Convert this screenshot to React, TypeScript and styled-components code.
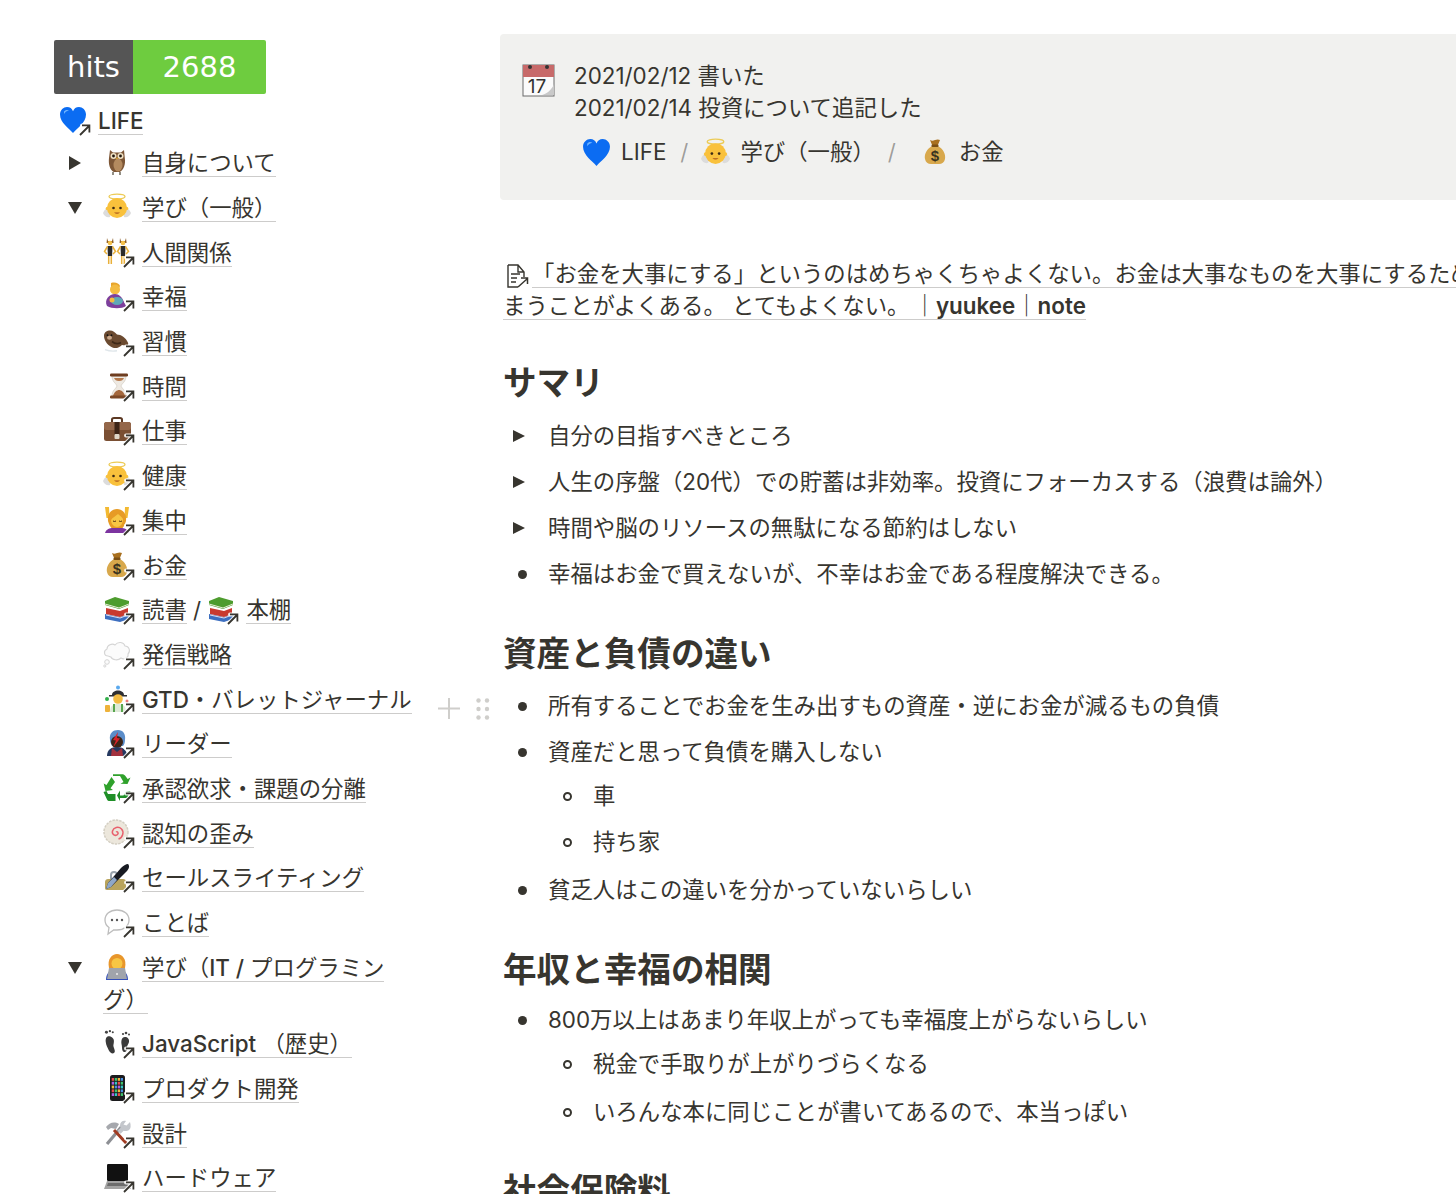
import React from "react";
import styled, { createGlobalStyle } from "styled-components";

const Global = createGlobalStyle`
  html, body { margin: 0; padding: 0; background: #fff; }
  body {
    font-family: Inter, "Noto Sans CJK JP", sans-serif;
    color: #37352f;
    font-size: 22.4px;
    line-height: 32px;
    overflow: hidden;
  }
  #root { width: 1456px; height: 1194px; overflow: hidden; }
`;

const Page = styled.div`
  display: flex;
  width: 1456px;
  height: 1194px;
  overflow: hidden;
`;

const Sidebar = styled.aside`
  position: relative;
  flex: none;
  width: 366px;
  padding: 40px 80px 0 54px;
`;

const Badge = styled.div`
  display: flex;
  width: 212px;
  height: 54px;
  margin-bottom: 5px;
  border-radius: 2px;
  overflow: hidden;
  font-family: "DejaVu Sans", sans-serif;
  font-size: 29px;
  line-height: 54px;
  color: #fff;
`;

const BadgeLabel = styled.span`
  width: 79px;
  text-align: center;
  background: #555;
`;

const BadgeCount = styled.span`
  flex: 1;
  text-align: center;
  background: #6ecc3f;
`;

const TopRow = styled.div`
  padding: 6px 0 4px 5px;
`;

const ToggleRow = styled.div`
  display: flex;
  padding: 6.35px 0;
`;

const CaretCell = styled.div`
  flex: none;
  width: 49px;
  height: 32px;
  padding-left: 14px;
  box-sizing: border-box;
  display: flex;
  align-items: center;
`;

const Caret = styled.span<{ $open?: boolean }>`
  display: block;
  width: 0;
  height: 0;
  ${(p) =>
    p.$open
      ? `border-left: 7.5px solid transparent; border-right: 7.5px solid transparent; border-top: 12px solid #37352f;`
      : `margin-left: 1px; border-top: 7px solid transparent; border-bottom: 7px solid transparent; border-left: 12.5px solid #37352f;`}
`;

const RowBody = styled.div`
  flex: 1;
  min-width: 0;
`;

const SubRow = styled.div`
  padding: 6.35px 0 6.35px 49px;
`;

const PageLink = styled.span`
  border-bottom: 1.5px solid rgba(55, 53, 47, 0.25);
`;

const Latin = styled.span`
  font-weight: 500;
`;

const Strong = styled.span`
  font-weight: 600;
`;

const IconBox = styled.span`
  position: relative;
  display: inline-block;
  width: 32px;
  height: 30px;
  margin-right: 7px;
  vertical-align: -7px;
`;

const EmojiSvg = styled.svg<{ $size: number }>`
  display: block;
  width: ${(p) => p.$size}px;
  height: ${(p) => p.$size}px;
  flex: none;
`;

const ArrowMark = styled.svg`
  position: absolute;
  right: 0;
  bottom: 0;
  width: 13px;
  height: 13px;
`;

const HoverControls = styled.svg`
  position: absolute;
  left: 436px;
  top: 696px;
  width: 58px;
  height: 26px;
`;

const Main = styled.main`
  flex: none;
  width: 1120px;
  padding-top: 34px;
`;

const Callout = styled.section`
  display: flex;
  height: 166px;
  box-sizing: border-box;
  padding: 26px 0 0 22px;
  background: #f1f1ef;
  border-radius: 4px;
`;

const CalloutIcon = styled.div`
  flex: none;
  width: 52px;
  margin-top: 3px;
`;

const CalloutText = styled.div`
  flex: 1;
`;

const TagRow = styled.div`
  display: flex;
  align-items: center;
  height: 32px;
  margin-top: 12px;
  padding-left: 8px;
`;

const Tag = styled.span`
  display: flex;
  align-items: center;
  gap: 10px;
`;

const Slash = styled.span<{ $before: number; $after: number }>`
  color: rgba(55, 53, 47, 0.45);
  margin: 0 ${(p) => p.$after}px 0 ${(p) => p.$before}px;
`;

const Content = styled.div`
  padding-left: 3px;
`;

const Lead = styled.p`
  margin: 57.5px 0 0;
  white-space: nowrap;
`;

const NoteIcon = styled.svg`
  display: inline-block;
  width: 24px;
  height: 26px;
  margin: 0 3px 0 2px;
  vertical-align: -7px;
`;

const Heading = styled.h2<{ $top: number }>`
  margin: ${(p) => p.$top}px 0 0;
  font-size: 33.6px;
  line-height: 44px;
  font-weight: 700;
`;

const Item = styled.div<{ $top: number; $nested?: boolean }>`
  display: flex;
  margin-top: ${(p) => p.$top}px;
  padding-left: ${(p) => (p.$nested ? 46 : 1)}px;
`;

const Marker = styled.div`
  flex: none;
  width: 44px;
  height: 32px;
  display: flex;
  align-items: center;
`;

const ItemCaret = styled.span`
  display: block;
  width: 0;
  height: 0;
  margin-left: 9px;
  border-top: 6.5px solid transparent;
  border-bottom: 6.5px solid transparent;
  border-left: 12px solid #37352f;
`;

const Dot = styled.span<{ $hollow?: boolean }>`
  display: block;
  width: 9px;
  height: 9px;
  box-sizing: border-box;
  margin-left: 13.5px;
  border-radius: 50%;
  ${(p) => (p.$hollow ? `border: 2px solid #37352f;` : `background: #37352f;`)}
`;

const LinkArrow = () => (
  <ArrowMark viewBox="0 0 13 13">
    <path d="M2 12 L11 3 M4 2.4 H11.4 V9.5" fill="none" stroke="#fff" strokeWidth="4" strokeLinecap="round" opacity="0.85" />
    <path d="M2 12 L11 3 M4 2.4 H11.4 V9.5" fill="none" stroke="#37352f" strokeWidth="1.8" />
  </ArrowMark>
);

const angel = (
  <>
    <path d="M0 20c2-5 6-6 8-4l-1 8c-3 1-6-1-7-4zM28 20c-2-5-6-6-8-4l1 8c3 1 6-1 7-4z" fill="#dcdcdc" />
    <ellipse cx="14" cy="3.500" rx="8" ry="2.400" fill="none" stroke="#eccb56" strokeWidth="1.300" />
    <circle cx="14" cy="15" r="10" fill="#f9c13c" />
    <circle cx="4.500" cy="15.500" r="1.800" fill="#f9c13c" />
    <circle cx="23.500" cy="15.500" r="1.800" fill="#f9c13c" />
    <circle cx="10.500" cy="15" r="1.300" fill="#3b2a14" />
    <circle cx="17.500" cy="15" r="1.300" fill="#3b2a14" />
    <path d="M11 19.500q3 2.400 6 0z" fill="#a8541c" />
  </>
);

const bag = (
  <>
    <path d="M9 2c2 1.200 3 .8 5 0s4-.6 5 0l-2.500 6h-5z" fill="#a9701f" />
    <path d="M11 8h6c5 3 8 8 7 13-.6 3.500-3 5-6 5h-8c-3 0-5.400-1.500-6-5-1-5 2-10 7-13z" fill="#d8a84c" />
    <rect x="10.500" y="6.500" width="7" height="2.400" rx="1" fill="#7b4f14" />
    <text x="14" y="23" textAnchor="middle" fontFamily="Liberation Sans, sans-serif" fontSize="15" fontWeight="700" fill="#3a3320">$</text>
  </>
);

const book = (
  <>
    <path d="M2 19l15 3 9-3v5l-9 3-15-3z" fill="#3d6fc0" />
    <path d="M3 20l14 3 8-3" stroke="#dde" strokeWidth="1" fill="none" />
    <path d="M3 13l14 3 8-3v6l-8 3-14-3z" fill="#c93a2f" />
    <path d="M2 6l10-4 14 4v4l-10 4-14-4z" fill="#4d9c2e" />
    <path d="M2 9l14 4 10-4" stroke="#e9edd9" strokeWidth="1" fill="none" />
  </>
);

const emojis: Record<string, React.ReactNode> = {
  heart: (
    <>
      <path d="M14 27C10 22.500 1 16.500 1 8.500 1 4 4.500 1 8 1c3 0 5 1.600 6 4.200C15 2.600 17 1 20 1c3.500 0 7 3 7 7.500 0 8-9 14-13 18.500z" fill="#0b6cf2" />
      <path d="M5 5.500C6 3.800 8.500 3.500 10 4.500 8 4.800 6 6 5 8z" fill="#6fb4ff" />
    </>
  ),
  owl: (
    <>
      <path d="M7 2l3 2.500h8L21 2l.8 8c1 6-1 12-5 14h-6c-4-2-5.500-8-4.800-14z" fill="#7d5636" />
      <ellipse cx="15" cy="17" rx="4.500" ry="6.500" fill="#b48a5f" />
      <circle cx="10.500" cy="8" r="3" fill="#f1e2c4" />
      <circle cx="17.500" cy="8" r="3" fill="#f1e2c4" />
      <circle cx="10.500" cy="8" r="1.400" fill="#20170f" />
      <circle cx="17.500" cy="8" r="1.400" fill="#20170f" />
      <path d="M14 9l-1.300 2h2.600z" fill="#d9a32b" />
      <path d="M10 24v3M17 24v3" stroke="#6f6a5c" strokeWidth="1.500" />
    </>
  ),
  angel,
  dancers: (
    <>
      {[7, 20].map((x) => (
        <g key={x}>
          <path d={`M${x - 3} 0l1 3h4l1-3 .6 5h-7z`} fill="#8a5a22" />
          <circle cx={x} cy="5" r="2.300" fill="#f4c04a" />
          <path d={`M${x - 2.500} 8h5l-.4 10h-4.200z`} fill="#2b2b2b" />
          <path d={`M${x - 2.500} 8.500l-3 5 2.500 2.500M${x + 2.500} 8.500l3 5-2.500 2.500M${x - 1.300} 18v8M${x + 1.300} 18v8`} stroke="#e9b03a" strokeWidth="1.500" fill="none" />
        </g>
      ))}
    </>
  ),
  feed: (
    <>
      <path d="M8 1c4-1.200 8 0 9 3l-1 2H8z" fill="#e8a52c" />
      <circle cx="12" cy="7.500" r="5" fill="#f3bb42" />
      <path d="M4 24c-3-6 2-12 8-12 4 0 7 3 9 8l2 4c-4 3-14 3-19 0z" fill="#7d3f9c" />
      <ellipse cx="14" cy="19" rx="6" ry="4" fill="#5fa9b8" />
      <circle cx="9" cy="18" r="2.500" fill="#f3bb42" />
    </>
  ),
  otter: (
    <g transform="translate(0 3) scale(1 1.150)">
      <path d="M1 5c0-3 3-4.500 6-4.500 3 0 5 1.500 7 3.500 4 0 9 3 11 7 1 2-1 3-3 2.500l-3-.5c-3 3-8 3.500-11 1.500C4 12.500 1 9 1 5z" fill="#6b4a30" />
      <circle cx="4.500" cy="4.500" r=".9" fill="#111" />
      <circle cx="8.500" cy="4.500" r=".9" fill="#111" />
      <ellipse cx="6.500" cy="6.800" rx="2.500" ry="1.700" fill="#c9a78a" />
      <path d="M9 10q4 3 9 1" stroke="#3f2918" strokeWidth="1.500" fill="none" />
      <path d="M2 17q6 2 12 1" stroke="#dfe6ea" strokeWidth="1.200" fill="none" />
    </g>
  ),
  hourglass: (
    <g transform="translate(1 0)">
      <path d="M8 4h14c0 6-4 7-5 10 1 3 5 4 5 10H8c0-6 4-7 5-10-1-3-5-4-5-10z" fill="#eee9e2" stroke="#cfc6bb" strokeWidth=".6" />
      <path d="M9 24c1-4 4-6 6-6s5 2 6 6z" fill="#a5683d" />
      <path d="M10 6h10c-1 2-2 3-5 3s-4-1-5-3z" fill="#b67a4d" />
      <rect x="6" y="1.500" width="18" height="3" rx="1.200" fill="#6e3d20" />
      <rect x="6" y="23.500" width="18" height="3" rx="1.200" fill="#7c4826" />
    </g>
  ),
  briefcase: (
    <>
      <path d="M9 7V3.500C9 2.500 10 2 11 2h6c1 0 2 .5 2 1.500V7" fill="none" stroke="#5d3a24" strokeWidth="2" />
      <rect x="1" y="6" width="27" height="19" rx="2.500" fill="#7a4f33" />
      <rect x="1" y="6" width="27" height="8" rx="2.500" fill="#94674a" />
      <rect x="11.500" y="6" width="5" height="13" fill="#3d2416" />
      <rect x="11.500" y="18" width="5" height="5" rx="1" fill="#ded6c8" />
    </>
  ),
  massage: (
    <>
      <path d="M2 1l1.500 11h3L6 1zM26 1l-1.500 11h-3L22 1z" fill="#f3b931" />
      <path d="M5 15C4 7 9 3 14 3s10 4 9 12c-1 4-3 7-5 8h-8c-2-1-4-4-5-8z" fill="#e79b25" />
      <path d="M8 14c2-3 5-4 7-6 2 2 4 3 5 5 0 5-3 8-6 8s-6-3-6-7z" fill="#f7c644" />
      <path d="M10 15q1.500 1 3 0M16 15q1.500 1 3 0" stroke="#4b2d10" strokeWidth="1" fill="none" />
      <path d="M2 27c1-4 5-5 8-5h8c3 0 7 1 8 5z" fill="#7c34a0" />
    </>
  ),
  bag,
  books: book,
  cloud: (
    <>
      <path d="M5 16c-4 0-5-5-1-7 0-4 5-6 8-4 3-4 9-3 10 1 4 0 6 5 3 8 1 4-4 6-7 4-3 3-9 2-10-1-1 0-2-1-3-1z" fill="#fbfbfb" stroke="#d5d5d5" strokeWidth="1.100" />
      <circle cx="4" cy="22" r="2.300" fill="#fbfbfb" stroke="#d5d5d5" />
      <circle cx="1.800" cy="26" r="1.100" fill="#fbfbfb" stroke="#d5d5d5" />
    </>
  ),
  farmer: (
    <>
      <circle cx="15" cy="2.500" r="2" fill="#5aa9ee" />
      <path d="M9 10c0-6 12-6 12 0h3v1.500H6V10z" fill="#2f2f33" />
      <circle cx="15" cy="14" r="4.800" fill="#f3bb42" />
      <path d="M7 27c0-6 3-8 8-8s8 2 8 8z" fill="#dfead8" />
      <path d="M11 19v8M19 19v8" stroke="#58a64f" strokeWidth="2" />
      <circle cx="4" cy="14" r="2" fill="#32b04a" />
      <circle cx="24" cy="16" r="1.500" fill="#ec7a7a" />
      <rect x="2" y="20" width="5" height="7" rx="1" fill="#eeb23a" />
    </>
  ),
  singer: (
    <>
      <path d="M7 11C6 4 10 1 15 1s8 4 7 10c0 3-1 5-2 6H9c-1-2-2-4-2-6z" fill="#5b8dc9" />
      <circle cx="14" cy="13" r="6" fill="#3b2519" />
      <path d="M15 3l-5 8 3 .5-3 7 7-9-3-.5z" fill="#d8232a" />
      <path d="M4 27c0-6 4-9 10-9s10 3 10 9z" fill="#24385f" />
      <path d="M9 19l5 4 5-4 1 8H8z" fill="#c22f36" opacity=".8" />
    </>
  ),
  recycle: (
    <>
      <path d="M10 2h7l3.500 6-3 1.700 7 .3 3-6.500-2.800 1.500L22 1.500C21.300.500 20 .200 19 .200h-9zM8.500 3L3.500 11 .7 9.500l1.800 7.500 7.500-1-2.500-1.700L12 8z" fill="#2fa12b" />
      <path d="M.5 18l3.500 7.500c.5 1 1.500 1.500 2.500 1.500h6v-7H5l-1.500-3zM17 16.500l-3 5 3 5.500v-3h5.500c1 0 2-.5 2.500-1.500L27.500 17l-5 1-2 3.500H17z" fill="#1f8f27" />
    </>
  ),
  naruto: (
    <>
      <circle cx="13" cy="13" r="12" fill="#ece7dc" stroke="#d3cec2" strokeDasharray="2.500 1" strokeWidth="1.500" />
      <path d="M13 13c1.500-1 3 1 1.500 2.500-2 2-6 0-5-3.500 1-3.500 6-5 9-2 3 3 1 9-3 10" fill="none" stroke="#e8606d" strokeWidth="1.500" />
    </>
  ),
  pen: (
    <>
      <path d="M5 16h15c2 0 3 1 3 3v6c0 1-1 2-2 2H4c-1.500 0-2-1-2-2v-6c0-2 1.500-3 3-3z" fill="#b9a45d" />
      <path d="M8 16v-4c0-4 6-4 6 0v4" stroke="#9aa3ad" strokeWidth="2" fill="none" />
      <path d="M25 1c2 2 1 5-2 8L8 24l-5 2 2-6L18 5c2-2 5-4 7-4z" fill="#181a22" />
      <path d="M5 20l6-6 3 3-6 7-5 2z" fill="#8ea7c8" />
    </>
  ),
  speech: (
    <>
      <path d="M14 2c7 0 12 4 12 10s-5 10-12 10c-1 0-2 0-3-.2L5 26l1-6.500C3 17.500 2 15 2 12 2 6 7 2 14 2z" fill="#fff" stroke="#bdbdbd" strokeWidth="1.300" />
      <circle cx="9" cy="12" r="1.200" fill="#555" />
      <circle cx="14" cy="12" r="1.200" fill="#555" />
      <circle cx="19" cy="12" r="1.200" fill="#555" />
    </>
  ),
  coder: (
    <>
      <path d="M6 15C4 6 9 1 14 1s10 5 8 14z" fill="#e8962b" />
      <circle cx="14" cy="10.500" r="5.500" fill="#f7c644" />
      <path d="M3 27c0-6 3-9 6-10h10c3 1 6 4 6 10z" fill="#3450ba" />
      <path d="M6 15h16l2 11H4z" fill="#a0a4ab" />
      <circle cx="14" cy="21" r="1" fill="#eee" />
    </>
  ),
  feet: (
    <>
      <g transform="translate(0 -3) scale(1.150)">
        <path d="M5 9c-2 0-3 2-2.600 5 .4 3 1.600 5 2.600 7 1 2 3 3.500 4.500 2.500 1.500-1 .5-3-.2-5-.7-2 .2-3 .2-5.500S7 9 5 9z" fill="#3a3a3a" />
        <circle cx="3" cy="5.500" r="1.300" fill="#444" />
        <circle cx="6" cy="4.500" r="1" fill="#444" />
        <circle cx="8.500" cy="5.500" r=".9" fill="#444" />
      </g>
      <path d="M22 8c2.500 0 4.500 2 4 5-.5 2.500-2 3-2 5.500 0 2 0 4-2 4.500s-3-2-3-4.500-1-4-.6-6.500C18.700 9.500 20 8 22 8z" fill="#3a3a3a" />
      <circle cx="20" cy="5" r="1.100" fill="#444" />
      <circle cx="23" cy="4" r="1.300" fill="#444" />
      <circle cx="26" cy="5.500" r="1" fill="#444" />
    </>
  ),
  phone: (
    <>
      <rect x="7" y="1" width="15" height="26" rx="2.500" fill="#1b1b1d" />
      {Array.from({ length: 20 }).map((_, i) => (
        <rect
          key={i}
          x={8.700 + (i % 4) * 3}
          y={4 + Math.floor(i / 4) * 3.800}
          width="2.300"
          height="2.800"
          fill={["#e94b4b", "#3fc16d", "#f2b83b", "#4a90e2", "#b45ce0", "#33c7c7"][i % 6]}
        />
      ))}
    </>
  ),
  tools: (
    <>
      <path d="M4 25L20 6" stroke="#8d8f94" strokeWidth="3.200" />
      <path d="M3 8C6 4 11 2 16 5l-3 5-5-1-3 2z" fill="#a6a8ad" />
      <path d="M11 11l13 14" stroke="#a03b22" strokeWidth="3" />
      <path d="M27 3l-3.500 3.500-3-1L23 2c-3-1-6 1-6 4.500 0 1 .2 1.700.6 2.300l-3 3 3 3 3-3c3 1 7-.5 7-4.300 0-1.500 0-3-.6-4.500z" fill="#c3c6cb" />
    </>
  ),
  laptop: (
    <>
      <rect x="4" y="1" width="21" height="17" rx="1.200" fill="#111" />
      <path d="M4 18h21l3 8H1z" fill="#a3a3a3" />
      <path d="M5 20h19l1 3H4z" fill="#6c6c6c" />
    </>
  ),
};

const Emoji = ({ name, size = 28 }: { name: string; size?: number }) => (
  <EmojiSvg $size={size} viewBox="0 0 28 28" aria-hidden="true">
    {emojis[name]}
  </EmojiSvg>
);

const LinkIcon = ({ name, plain }: { name: string; plain?: boolean }) => (
  <IconBox>
    <Emoji name={name} />
    {!plain && <LinkArrow />}
  </IconBox>
);

const CalendarSvg = styled.svg`
  display: block;
  width: 33px;
  height: 34px;
`;

const CalendarIcon = () => (
  <CalendarSvg viewBox="0 0 33 34" aria-hidden="true">
    <rect x="1" y="2" width="31" height="31" fill="#fbfbfb" stroke="#6a6a6a" strokeWidth="1" />
    <rect x="1" y="2" width="31" height="12" fill="#c76a6a" />
    <circle cx="8" cy="4" r="2" fill="#333" />
    <circle cx="25" cy="4" r="2" fill="#333" />
    <text x="15" y="30" textAnchor="middle" fontFamily="Inter, sans-serif" fontSize="19" fill="#333">17</text>
    <path d="M32 21v11H20c4-1 10-5 12-11z" fill="#c9c9c9" />
  </CalendarSvg>
);

type Sub = { e: string; t: React.ReactNode };
const generalSubs: Sub[] = [
  { e: "dancers", t: "人間関係" },
  { e: "feed", t: "幸福" },
  { e: "otter", t: "習慣" },
  { e: "hourglass", t: "時間" },
  { e: "briefcase", t: "仕事" },
  { e: "angel", t: "健康" },
  { e: "massage", t: "集中" },
  { e: "bag", t: "お金" },
];
const generalSubs2: Sub[] = [
  { e: "cloud", t: "発信戦略" },
  { e: "farmer", t: <><Latin>GTD</Latin>・バレットジャーナル</> },
  { e: "singer", t: "リーダー" },
  { e: "recycle", t: "承認欲求・課題の分離" },
  { e: "naruto", t: "認知の歪み" },
  { e: "pen", t: "セールスライティング" },
  { e: "speech", t: "ことば" },
];
const itSubs: Sub[] = [
  { e: "feet", t: <><Latin>JavaScript</Latin> （歴史）</> },
  { e: "phone", t: "プロダクト開発" },
  { e: "tools", t: "設計" },
  { e: "laptop", t: "ハードウェア" },
];

const SubList = ({ items }: { items: Sub[] }) => (
  <>
    {items.map((s) => (
      <SubRow key={s.e}>
        <LinkIcon name={s.e} />
        <PageLink>{s.t}</PageLink>
      </SubRow>
    ))}
  </>
);

export default function App() {
  return (
    <Page>
      <Global />
      <Sidebar>
        <Badge>
          <BadgeLabel>hits</BadgeLabel>
          <BadgeCount>2688</BadgeCount>
        </Badge>
        <TopRow>
          <LinkIcon name="heart" />
          <PageLink><Latin>LIFE</Latin></PageLink>
        </TopRow>
        <ToggleRow>
          <CaretCell><Caret /></CaretCell>
          <RowBody><LinkIcon name="owl" plain /><PageLink>自身について</PageLink></RowBody>
        </ToggleRow>
        <ToggleRow>
          <CaretCell><Caret $open /></CaretCell>
          <RowBody><LinkIcon name="angel" plain /><PageLink>学び（一般）</PageLink></RowBody>
        </ToggleRow>
        <SubList items={generalSubs} />
        <SubRow>
          <LinkIcon name="books" />
          <PageLink>読書</PageLink> /{" "}
          <LinkIcon name="books" />
          <PageLink>本棚</PageLink>
        </SubRow>
        <SubList items={generalSubs2} />
        <ToggleRow>
          <CaretCell><Caret $open /></CaretCell>
          <RowBody>
            <LinkIcon name="coder" plain />
            <PageLink>学び（<Latin>IT / </Latin>プログラミン<br />グ）</PageLink>
          </RowBody>
        </ToggleRow>
        <SubList items={itSubs} />
        <HoverControls viewBox="0 0 58 26">
          <path d="M13 2v21M2 12.500h22" stroke="#cfcecb" strokeWidth="2" />
          {[42.500, 51].map((x) =>
            [4.500, 13, 21.500].map((y) => <circle key={`${x}-${y}`} cx={x} cy={y} r="2.200" fill="#cfcecb" />)
          )}
        </HoverControls>
      </Sidebar>
      <Main>
        <Callout>
          <CalloutIcon><CalendarIcon /></CalloutIcon>
          <CalloutText>
            <div>2021/02/12 書いた</div>
            <div>2021/02/14 投資について追記した</div>
            <TagRow>
              <Tag><Emoji name="heart" size={29} />LIFE</Tag>
              <Slash $before={14} $after={13}>/</Slash>
              <Tag><Emoji name="angel" size={29} />学び（一般）</Tag>
              <Slash $before={13} $after={25}>/</Slash>
              <Tag><Emoji name="bag" size={28} />お金</Tag>
            </TagRow>
          </CalloutText>
        </Callout>
        <Content>
          <Lead>
            <NoteIcon viewBox="0 0 24 26">
              <path d="M3 2h10l6 7v5M3 2v22h10M13 2v7h6M6 11h9M6 15h6M6 19h5" fill="none" stroke="#37352f" strokeWidth="1.400" />
              <path d="M13 24l9-8M16 15h6.500v6" fill="none" stroke="#37352f" strokeWidth="1.500" />
            </NoteIcon>
            <PageLink>「お金を大事にする」というのはめちゃくちゃよくない。お金は大事なものを大事にするために使うべきなのに使ってし</PageLink>
            <br />
            <PageLink>まうことがよくある。 とてもよくない。{"\u2009"}｜<Strong>yuukee</Strong>｜<Strong>note</Strong></PageLink>
          </Lead>
          <Heading $top={39.5}>サマリ</Heading>
          <Item $top={15}><Marker><ItemCaret /></Marker>自分の目指すべきところ</Item>
          <Item $top={14}><Marker><ItemCaret /></Marker>人生の序盤（20代）での貯蓄は非効率。投資にフォーカスする（浪費は論外）</Item>
          <Item $top={14}><Marker><ItemCaret /></Marker>時間や脳のリソースの無駄になる節約はしない</Item>
          <Item $top={14}><Marker><Dot /></Marker>幸福はお金で買えないが、不幸はお金である程度解決できる。</Item>
          <Heading $top={42}>資産と負債の違い</Heading>
          <Item $top={14}><Marker><Dot /></Marker>所有することでお金を生み出すもの資産・逆にお金が減るもの負債</Item>
          <Item $top={14}><Marker><Dot /></Marker>資産だと思って負債を購入しない</Item>
          <Item $top={12} $nested><Marker><Dot $hollow /></Marker>車</Item>
          <Item $top={14} $nested><Marker><Dot $hollow /></Marker>持ち家</Item>
          <Item $top={16}><Marker><Dot /></Marker>貧乏人はこの違いを分かっていないらしい</Item>
          <Heading $top={42}>年収と幸福の相関</Heading>
          <Item $top={12}><Marker><Dot /></Marker>800万以上はあまり年収上がっても幸福度上がらないらしい</Item>
          <Item $top={12} $nested><Marker><Dot $hollow /></Marker>税金で手取りが上がりづらくなる</Item>
          <Item $top={16} $nested><Marker><Dot $hollow /></Marker>いろんな本に同じことが書いてあるので、本当っぽい</Item>
          <Heading $top={41}>社会保険料</Heading>
        </Content>
      </Main>
    </Page>
  );
}
